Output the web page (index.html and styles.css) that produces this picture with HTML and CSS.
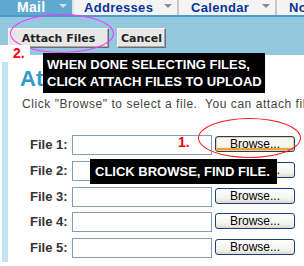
FILE: index.html
```html
<!DOCTYPE html>
<html>
<head>
<meta charset="utf-8">
<link rel="stylesheet" href="styles.css">
</head>
<body>
<div class="page">
  <div class="tabs">
    <div class="tab tab-active"><span class="tab-label">Mail</span><span class="arrow arrow-light"></span></div>
    <div class="tab-sep sep-light"></div>
    <div class="tab tab-addr"><span class="tab-label">Addresses</span><span class="arrow"></span></div>
    <div class="tab-sep"></div>
    <div class="tab tab-cal"><span class="tab-label">Calendar</span><span class="arrow"></span></div>
    <div class="tab-sep"></div>
    <div class="tab tab-notes"><span class="tab-label">Notepad</span></div>
  </div>
  <div class="tabline"></div>
  <div class="toolbar">
    <button class="tbtn tbtn-attach">Attach Files</button>
    <button class="tbtn tbtn-cancel">Cancel</button>
  </div>
  <div class="content">
    <div class="strip"></div>
    <div class="main">
      <h1 class="heading">Attach Files</h1>
      <p class="intro">Click "Browse" to select a file.&nbsp; You can attach files up to 10MB.</p>
      <div class="rows">
        <div class="row"><span class="flabel">File 1:</span><span class="finput"></span><span class="browse browse-focus">Browse...</span></div>
        <div class="row"><span class="flabel">File 2:</span><span class="finput"></span><span class="browse">Browse...</span></div>
        <div class="row"><span class="flabel">File 3:</span><span class="finput"></span><span class="browse">Browse...</span></div>
        <div class="row"><span class="flabel">File 4:</span><span class="finput"></span><span class="browse">Browse...</span></div>
        <div class="row"><span class="flabel">File 5:</span><span class="finput"></span><span class="browse">Browse...</span></div>
      </div>
    </div>
  </div>

  <div class="ellipse ellipse-magenta"></div>
  <div class="step step-2">2.</div>
  <div class="note note-1">WHEN DONE SELECTING FILES,<br>CLICK ATTACH FILES TO UPLOAD</div>
  <div class="ellipse ellipse-red"></div>
  <div class="step step-1">1.</div>
  <div class="note note-2">CLICK BROWSE, FIND FILE.</div>
</div>
</body>
</html>
```

FILE: styles.css
```css
html, body {
  margin: 0;
  padding: 0;
  background: #ffffff;
}
.page {
  position: relative;
  width: 304px;
  height: 266px;
  overflow: hidden;
  font-family: "Liberation Sans", Arial, sans-serif;
}
.tabs {
  display: flex;
  height: 15px;
  background: #f4f4f4;
  white-space: nowrap;
}
.tab {
  display: flex;
  align-items: center;
  height: 15px;
  background: #f4f4f4;
  color: #0a3399;
  font-weight: bold;
  font-size: 13px;
  letter-spacing: 0.3px;
  flex: none;
}
.tab-label {
  line-height: 15px;
}
.tab-active {
  background: #5fa9d1;
  color: #ffffff;
  width: 72px;
  padding-left: 17px;
  box-sizing: border-box;
  font-size: 14px;
}
.tab-addr {
  width: 103px;
  padding-left: 10px;
  box-sizing: border-box;
}
.tab-cal {
  width: 96px;
  padding-left: 12px;
  box-sizing: border-box;
}
.tab-notes {
  padding-left: 12px;
}
.arrow {
  width: 0;
  height: 0;
  border-left: 4px solid transparent;
  border-right: 4px solid transparent;
  border-top: 4px solid #8c8c8c;
  margin-left: auto;
  margin-right: 5px;
  margin-top: -4px;
}
.arrow-light {
  border-top-color: #d6dde3;
}
.tab-sep {
  width: 2px;
  height: 15px;
  background: #c8c8c8;
  flex: none;
}
.sep-light {
  background: #e2e2e2;
}
.tabline {
  height: 2px;
  background: #4a9ccb;
}
.toolbar {
  height: 38px;
  box-sizing: border-box;
  background: #93c8de;
  padding: 11px 0 0 8px;
  display: flex;
  gap: 8px;
  align-items: flex-start;
}
.tbtn {
  height: 20px;
  margin: 0;
  padding: 0;
  border: 1px solid #6e6e6e;
  border-top-color: #f4f4f4;
  border-left-color: #f4f4f4;
  box-shadow: inset -1px -1px 0 #a8a8a8;
  background: #e8e8e8;
  font-family: "DejaVu Sans", Verdana, sans-serif;
  font-weight: bold;
  font-size: 11px;
  color: #222222;
}
.tbtn-attach {
  width: 101px;
}
.tbtn-cancel {
  width: 49px;
}
.content {
  display: flex;
}
.strip {
  width: 6px;
  margin-left: 2px;
  margin-top: 7px;
  height: 200px;
  background: #c3e3ee;
  flex: none;
}
.main {
  padding-left: 12px;
  padding-top: 11px;
  white-space: nowrap;
}
.heading {
  margin: 0;
  font-size: 22px;
  line-height: 26px;
  color: #3399cc;
  font-weight: bold;
}
.intro {
  margin: 5px 0 0 2px;
  font-size: 12px;
  line-height: 14px;
  letter-spacing: 0.55px;
  color: #444444;
}
.rows {
  margin-top: 24px;
  display: flex;
  flex-direction: column;
  gap: 5.75px;
}
.row {
  display: flex;
  align-items: flex-start;
  height: 20px;
}
.flabel {
  width: 42px;
  margin-left: 10px;
  font-weight: bold;
  font-size: 13px;
  line-height: 20px;
  color: #333333;
}
.finput {
  width: 140px;
  height: 20px;
  box-sizing: border-box;
  border: 1px solid #7f9db9;
  background: #ffffff;
}
.browse {
  margin-left: 3px;
  margin-top: 1px;
  width: 80px;
  height: 16px;
  box-sizing: border-box;
  border: 1px solid #1c3f7c;
  border-radius: 3px;
  background: linear-gradient(#ffffff, #f3f3ee 70%, #dcd8cc);
  font-size: 12px;
  line-height: 14px;
  text-align: center;
  color: #000000;
}
.browse-focus {
  box-shadow: inset 0 0 0 1px #fbd17a, inset 0 -2px 0 1px #f0a030;
}

.ellipse {
  position: absolute;
  border-radius: 50%;
  box-sizing: border-box;
}
.ellipse-magenta {
  left: 10px;
  top: 14px;
  width: 104px;
  height: 39px;
  border: 1px solid #ff33ff;
}
.ellipse-red {
  left: 198px;
  top: 118px;
  width: 103px;
  height: 40px;
  border: 1px solid #ff1a1a;
}
.step {
  position: absolute;
  color: #ff0000;
  font-weight: bold;
  font-size: 14px;
  line-height: 16px;
}
.step-2 {
  left: 0;
  top: 45px;
  width: 30px;
  height: 16px;
  padding-left: 13px;
  box-sizing: border-box;
  background: #ffffff;
}
.step-1 {
  left: 178px;
  top: 134px;
}
.note {
  position: absolute;
  background: #000000;
  color: #ffffff;
  font-weight: bold;
  font-size: 13px;
  line-height: 17px;
  white-space: nowrap;
  box-sizing: border-box;
}
.note-1 {
  left: 43px;
  top: 53px;
  width: 222px;
  height: 40px;
  padding: 3px 0 0 4px;
}
.note-2 {
  left: 90px;
  top: 159px;
  width: 187px;
  height: 25px;
  padding: 4px 0 0 5px;
}
```
